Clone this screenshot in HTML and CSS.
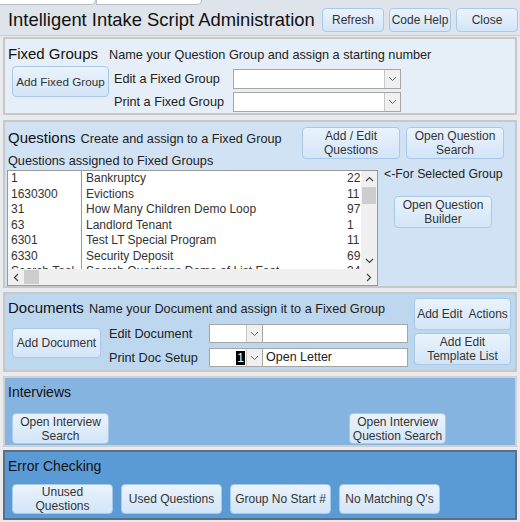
FILE: index.html
```html
<!DOCTYPE html>
<html>
<head>
<meta charset="utf-8">
<link rel="stylesheet" href="styles.css">
</head>
<body>
<div class="app">
  <div class="tabs">
    <div class="tab tab-a"></div>
    <div class="tab tab-b"></div>
  </div>
  <div class="header">
    <div class="title">Intelligent Intake Script Administration</div>
    <div class="head-btns">
      <button class="btn hbtn">Refresh</button>
      <button class="btn hbtn">Code Help</button>
      <button class="btn hbtn">Close</button>
    </div>
  </div>

  <section class="sec sec-fixed">
    <div class="fixed-top">
      <span class="sec-title">Fixed Groups</span>
      <span class="lbl">Name your Question Group and assign a starting number</span>
    </div>
    <div class="fixed-body">
      <button class="btn btn-addfixed">Add Fixed Group</button>
      <div class="fixed-rows">
        <div class="frow"><span class="lbl flbl">Edit a Fixed Group</span><div class="combo wide"><div class="cbox"></div><div class="carrow"><svg width="9" height="6" viewBox="0 0 9 6"><path d="M1 1 L4.5 4.5 L8 1" fill="none" stroke="#666" stroke-width="1"/></svg></div></div></div>
        <div class="frow"><span class="lbl flbl">Print a Fixed Group</span><div class="combo wide"><div class="cbox"></div><div class="carrow"><svg width="9" height="6" viewBox="0 0 9 6"><path d="M1 1 L4.5 4.5 L8 1" fill="none" stroke="#666" stroke-width="1"/></svg></div></div></div>
      </div>
    </div>
  </section>

  <section class="sec sec-q">
    <div class="q-grid">
      <div class="q-left">
        <div class="q-top">
          <span class="sec-title">Questions</span>
          <span class="lbl">Create and assign to a Fixed Group</span>
        </div>
        <div class="lbl q-sub">Questions assigned to Fixed Groups</div>
        <div class="listbox">
          <div class="list-rows">
            <div class="lrow"><span class="c1">1</span><span class="c2">Bankruptcy</span><span class="c3">22</span></div>
            <div class="lrow"><span class="c1">1630300</span><span class="c2">Evictions</span><span class="c3">11</span></div>
            <div class="lrow"><span class="c1">31</span><span class="c2">How Many Children Demo Loop</span><span class="c3">97</span></div>
            <div class="lrow"><span class="c1">63</span><span class="c2">Landlord Tenant</span><span class="c3">1</span></div>
            <div class="lrow"><span class="c1">6301</span><span class="c2">Test LT Special Program</span><span class="c3">11</span></div>
            <div class="lrow"><span class="c1">6330</span><span class="c2">Security Deposit</span><span class="c3">69</span></div>
            <div class="lrow"><span class="c1">Search Tool</span><span class="c2">Search Questions Demo of List Feat</span><span class="c3">34</span></div>
          </div>
          <div class="vscroll">
            <div class="sarrow"><svg width="9" height="6" viewBox="0 0 9 6"><path d="M1 5 L4.5 1.5 L8 5" fill="none" stroke="#444" stroke-width="1.2"/></svg></div>
            <div class="vthumb"></div>
            <div class="vspace"></div>
            <div class="sarrow"><svg width="9" height="6" viewBox="0 0 9 6"><path d="M1 1 L4.5 4.5 L8 1" fill="none" stroke="#444" stroke-width="1.2"/></svg></div>
          </div>
          <div class="hscroll">
            <div class="harrow"><svg width="6" height="9" viewBox="0 0 6 9"><path d="M5 1 L1.5 4.5 L5 8" fill="none" stroke="#444" stroke-width="1.2"/></svg></div>
            <div class="hthumb"></div>
            <div class="hspace"></div>
            <div class="harrow"><svg width="6" height="9" viewBox="0 0 6 9"><path d="M1 1 L4.5 4.5 L1 8" fill="none" stroke="#444" stroke-width="1.2"/></svg></div>
          </div>
        </div>
      </div>
      <div class="q-right">
        <div class="q-btns">
          <button class="btn qbtn">Add / Edit<br>Questions</button>
          <button class="btn qbtn">Open Question<br>Search</button>
        </div>
        <div class="q-side">
          <div class="sel-lbl">&lt;-For Selected Group</div>
          <button class="btn qbtn builder">Open Question<br>Builder</button>
        </div>
      </div>
    </div>
  </section>

  <section class="sec sec-doc">
    <div class="doc-main">
      <div class="doc-top">
        <span class="sec-title">Documents</span>
        <span class="lbl">Name your Document and assign it to a Fixed Group</span>
      </div>
      <div class="doc-body">
        <button class="btn btn-adddoc">Add Document</button>
        <div class="doc-rows">
          <div class="drow"><span class="lbl dlbl">Edit Document</span><div class="combo small"><div class="cbox"></div><div class="carrow"><svg width="9" height="6" viewBox="0 0 9 6"><path d="M1 1 L4.5 4.5 L8 1" fill="none" stroke="#666" stroke-width="1"/></svg></div></div><div class="tbox"></div></div>
          <div class="drow"><span class="lbl dlbl">Print Doc Setup</span><div class="combo small"><div class="cbox num"><span class="sel">1</span></div><div class="carrow"><svg width="9" height="6" viewBox="0 0 9 6"><path d="M1 1 L4.5 4.5 L8 1" fill="none" stroke="#666" stroke-width="1"/></svg></div></div><div class="tbox">Open Letter</div></div>
        </div>
      </div>
    </div>
    <div class="doc-btns">
      <button class="btn dbtn">Add Edit&nbsp; Actions</button>
      <button class="btn dbtn">Add Edit<br>Template List</button>
    </div>
  </section>

  <section class="sec sec-int">
    <div class="sec-title small">Interviews</div>
    <div class="int-btns">
      <button class="btn ibtn">Open Interview<br>Search</button>
      <button class="btn ibtn">Open Interview<br>Question Search</button>
    </div>
  </section>

  <section class="sec sec-err">
    <div class="sec-title small">Error Checking</div>
    <div class="err-btns">
      <button class="btn ebtn">Unused<br>Questions</button>
      <button class="btn ebtn">Used Questions</button>
      <button class="btn ebtn">Group No Start #</button>
      <button class="btn ebtn">No Matching Q's</button>
    </div>
  </section>
</div>
</body>
</html>
```

FILE: styles.css
```css
* { box-sizing: border-box; }
html, body { margin: 0; padding: 0; }
body {
  width: 520px;
  height: 522px;
  overflow: hidden;
  background: #e9ebee;
  font-family: "Liberation Sans", Arial, sans-serif;
  color: #222;
}
.app { display: flex; flex-direction: column; }

.tabs {
  height: 5px;
  background: #dfe4ea;
  display: flex;
}
.tab {
  height: 5px;
  background: #fff;
  border: 1px solid #b9bec6;
  border-top: none;
}
.tab-a { width: 96px; border-radius: 0 0 6px 0; border-left: none; }
.tab-b { width: 106px; border-radius: 0 0 6px 0; }

.header {
  height: 31px;
  background: #dfe4ea;
  display: flex;
  align-items: center;
  justify-content: space-between;
  padding: 0 2px 0 8px;
  border-bottom: 1px solid #c9cdd3;
}
.title {
  font-size: 18.4px;
  color: #111;
  white-space: nowrap;
  flex: none;
}
.head-btns { display: flex; gap: 5px; padding-top: 0; flex: none; }

.btn {
  font-family: "Liberation Sans", Arial, sans-serif;
  font-size: 12px;
  color: #333;
  line-height: 14px;
  background: linear-gradient(#eaf3fc, #d3e5f8);
  border: 1px solid #a9c9ea;
  border-radius: 4px;
  padding: 0;
  text-align: center;
  cursor: default;
  white-space: nowrap;
}
.hbtn { width: 62px; height: 24px; }

.sec {
  margin: 0 3px 0 3px;
  border: 2px solid #c8c8c8;
}
.sec-title { font-size: 15px; color: #111; white-space: nowrap; }
.sec-title.small { font-size: 14px; }
.lbl { font-size: 12.7px; color: #222; white-space: nowrap; }

/* Fixed groups */
.sec-fixed {
  margin-top: 1px;
  height: 78px;
  background: #e6eef8;
  padding: 6px 0 0 3px;
}
.fixed-top { display: flex; align-items: baseline; gap: 11px; }
.fixed-body { display: flex; gap: 5px; margin-top: 1px; }
.btn-addfixed { width: 97px; height: 31px; margin-top: 3px; margin-left: 4px; font-size: 11.7px; }
.fixed-rows { display: flex; flex-direction: column; gap: 3px; margin-top: 6px; }
.frow { display: flex; align-items: center; height: 20px; }
.flbl { width: 119px; }
.combo { display: flex; height: 20px; border: 1px solid #a6a6a6; background: #fff; }
.combo.wide { width: 168px; }
.cbox { flex: 1; }
.carrow {
  width: 16px;
  border-left: 1px solid #c8c8c8;
  background: #f0f0f0;
  display: flex; align-items: center; justify-content: center;
}

/* Questions */
.sec-q {
  margin-top: 5px;
  height: 168px;
  background: #d1e2f4;
  padding: 4px 0 0 2px;
}
.q-grid { display: flex; }
.q-left { width: 372px; flex: none; }
.q-top { display: flex; align-items: baseline; gap: 5px; padding-top: 3px; padding-left: 1px; }
.q-sub { margin-top: 8px; padding-left: 1px; height: 14px; line-height: 14px; }
.listbox {
  margin-top: 2px;
  width: 371px;
  height: 116px;
  background: #fff;
  border: 1px solid #9a9a9a;
  display: grid;
  grid-template-columns: minmax(0, 1fr) 16px;
  grid-template-rows: minmax(0, 1fr) 16px;
  overflow: hidden;
}
.list-rows { overflow: hidden; }
.lrow { display: flex; height: 15.5px; font-size: 12px; line-height: 15.5px; color: #333; white-space: nowrap; }
.c1 { width: 74px; padding-left: 3px; border-right: 1px solid #9a9a9a; flex: none; overflow: hidden; }
.c2 { width: 265px; padding-left: 4px; flex: none; overflow: hidden; }
.c3 { flex: 1; overflow: hidden; }
.vscroll { background: #f0f0f0; display: flex; flex-direction: column; }
.sarrow { height: 16px; display: flex; align-items: center; justify-content: center; }
.vthumb { height: 17px; background: #cdcdcd; margin: 0 1px; }
.vspace { flex: 1; }
.hscroll { grid-column: 1 / 3; background: #f0f0f0; display: flex; }
.harrow { width: 16px; display: flex; align-items: center; justify-content: center; }
.hthumb { width: 15px; background: #cdcdcd; margin: 1px 0; }
.hspace { flex: 1; }

.q-right { flex: 1; display: flex; flex-direction: column; }
.q-btns { display: flex; gap: 6px; margin-left: -77px; margin-top: 1px; }
.qbtn { width: 98px; height: 32px; flex: none; }
.q-side { margin-top: 8px; margin-left: 5px; display: flex; flex-direction: column; align-items: flex-start; }
.sel-lbl { font-size: 12.3px; white-space: nowrap; }
.builder { margin-top: 15px; margin-left: 10px; }

/* Documents */
.sec-doc {
  margin-top: 4px;
  height: 80px;
  background: #bdd7ef;
  display: flex;
  padding: 3px 0 0 3px;
}
.doc-main { flex: 1; }
.doc-top { display: flex; align-items: baseline; gap: 5px; padding-top: 2px; }
.doc-body { display: flex; gap: 8px; }
.btn-adddoc { width: 89px; height: 30px; margin-top: 12px; margin-left: 4px; }
.doc-rows { display: flex; flex-direction: column; gap: 5px; margin-top: 8px; }
.drow { display: flex; align-items: center; height: 19px; }
.dlbl { width: 100px; }
.combo.small { width: 54px; height: 19px; border-color: #a6a6a6; }
.cbox.num { display: flex; justify-content: flex-end; align-items: center; padding-right: 1px; }
.sel { background: #000; color: #fff; font-size: 12px; line-height: 14px; padding: 0 1px; }
.tbox {
  width: 145px; height: 19px; background: #fff; border: 1px solid #a6a6a6; border-left: none;
  font-size: 12.5px; line-height: 17px; padding-left: 3px; color: #222;
}
.doc-btns { display: flex; flex-direction: column; gap: 3px; padding-right: 4px; padding-top: 1px; }
.dbtn { width: 97px; height: 32px; }

/* Interviews */
.sec-int {
  margin-top: 4px;
  height: 71px;
  background: #86b4e0;
  padding: 6px 0 0 3px;
  border-color: #d0d0d0;
}
.int-btns { display: flex; gap: 240px; margin-top: 13px; padding-left: 4px; }
.ibtn { width: 97px; height: 31px; }

/* Error checking */
.sec-err {
  margin-top: 3px;
  height: 70px;
  background: #5b9bd5;
  padding: 6px 0 0 3px;
  border-color: #5e6f82;
}
.err-btns { display: flex; gap: 8px; margin-top: 10px; padding-left: 4px; }
.ebtn { width: 101px; height: 30px; }
```
